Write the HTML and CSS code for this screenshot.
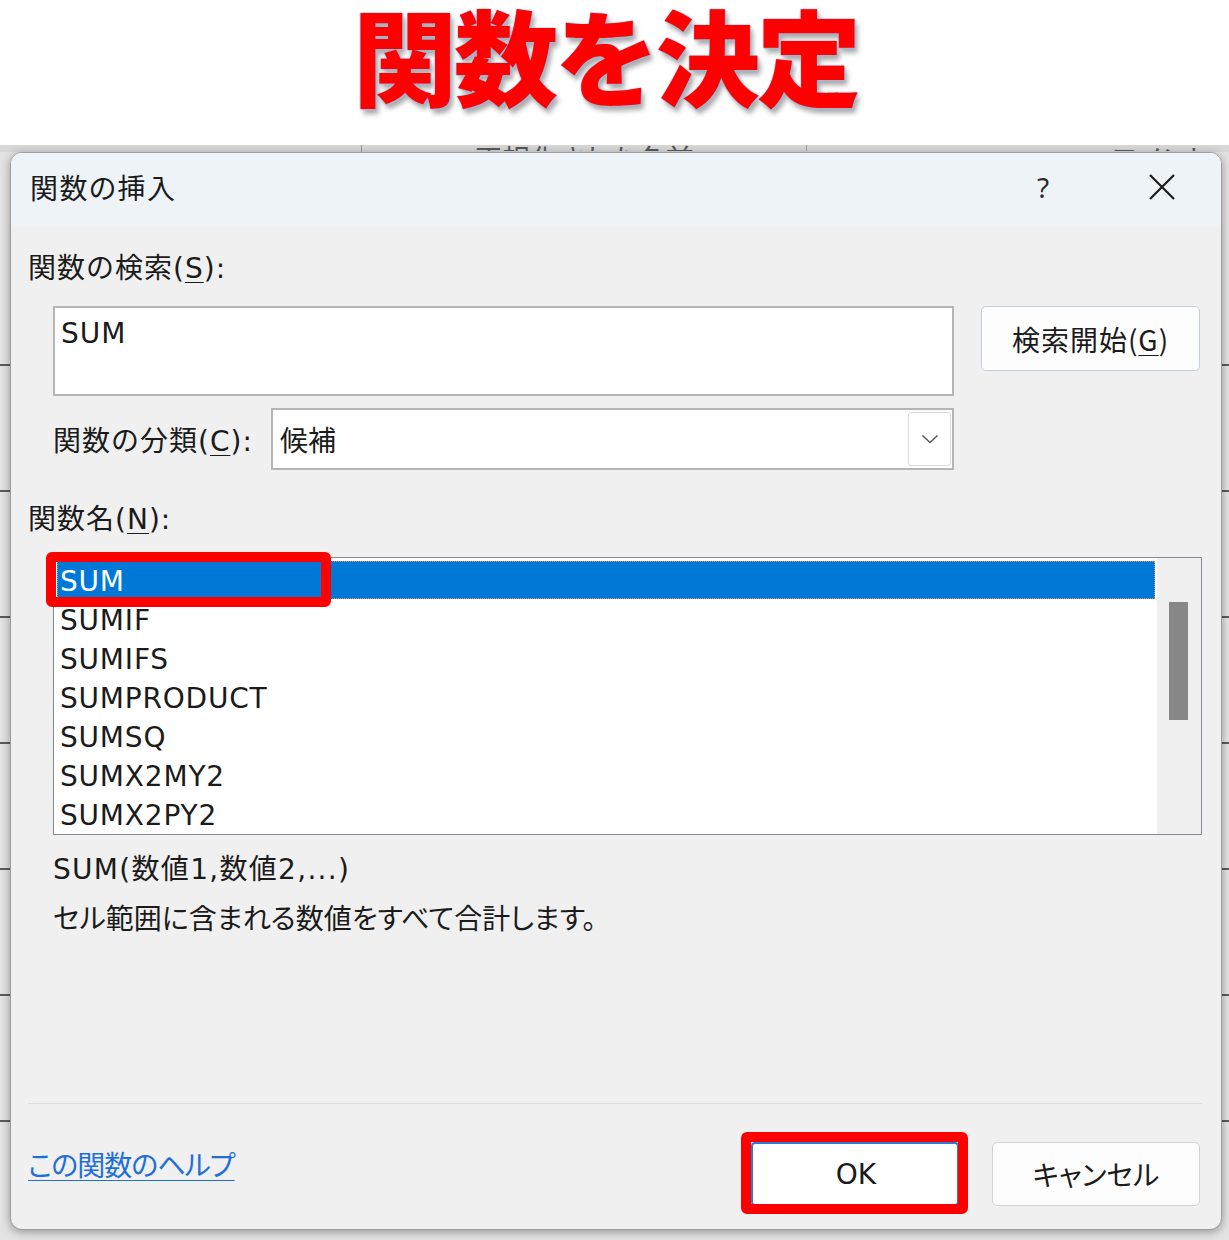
FILE: index.html
```html
<!DOCTYPE html>
<html lang="ja">
<head>
<meta charset="utf-8">
<title>関数の挿入</title>
<link rel="stylesheet" href="styles.css">
</head>
<body>
<header class="banner">
  <h1 class="headline">関数を決定</h1>
</header>
<main class="stage">
  <div class="sheet-head">
    <span class="sheet-col sheet-col-a"></span>
    <span class="sheet-col sheet-col-b">正規化された名前</span>
    <span class="sheet-col sheet-col-c">コメント</span>
  </div>
  <section class="dialog">
    <div class="titlebar">
      <span class="title">関数の挿入</span>
      <span class="help">?</span>
      <svg class="close" width="28" height="28" viewBox="0 0 28 28" aria-hidden="true">
        <path d="M2 2 L26 26 M26 2 L2 26" stroke="#1c1c1c" stroke-width="2.2" fill="none"/>
      </svg>
    </div>
    <div class="body">
      <div class="label">関数の検索(<u>S</u>):</div>
      <div class="search-row">
        <div class="textbox">SUM</div>
        <button class="btn btn-search">検索開始(<u>G</u>)</button>
      </div>
      <div class="cat-row">
        <span class="cat-label">関数の分類(<u>C</u>):</span>
        <div class="select">
          <span class="select-value">候補</span>
          <span class="drop">
            <svg width="18" height="10" viewBox="0 0 18 10" aria-hidden="true">
              <path d="M1.5 1.5 L9 8.5 L16.5 1.5" stroke="#5a5a5a" stroke-width="1.6" fill="none"/>
            </svg>
          </span>
        </div>
      </div>
      <div class="label label-n">関数名(<u>N</u>):</div>
      <div class="listbox">
        <ul class="items">
          <li class="item selected">SUM</li>
          <li class="item">SUMIF</li>
          <li class="item">SUMIFS</li>
          <li class="item">SUMPRODUCT</li>
          <li class="item">SUMSQ</li>
          <li class="item">SUMX2MY2</li>
          <li class="item">SUMX2PY2</li>
        </ul>
        <div class="scrollbar"><div class="thumb"></div></div>
        <span class="mark mark-sum"></span>
      </div>
      <p class="syntax">SUM(数値1,数値2,...)</p>
      <p class="desc">セル範囲に含まれる数値をすべて合計します。</p>
      <div class="footer">
        <a class="help-link" href="#">この関数のヘルプ</a>
        <div class="buttons">
          <div class="ok-wrap">
            <button class="btn btn-ok">OK</button>
            <span class="mark mark-ok"></span>
          </div>
          <button class="btn btn-cancel">キャンセル</button>
        </div>
      </div>
    </div>
  </section>
</main>
</body>
</html>
```

FILE: styles.css
```css
* {
  box-sizing: border-box;
}

html, body {
  margin: 0;
  padding: 0;
  background: #ffffff;
}

body {
  width: 1229px;
  height: 1240px;
  overflow: hidden;
  font-family: "Noto Sans CJK JP", "Noto Sans", sans-serif;
  color: #1b1b1b;
  font-feature-settings: "palt";
}

.banner {
  height: 145px;
  display: flex;
  justify-content: center;
  align-items: flex-start;
  background: #ffffff;
}

.headline {
  margin: 0;
  padding-right: 18px;
  font-family: "Noto Sans CJK JP", sans-serif;
  font-weight: 900;
  font-size: 104px;
  line-height: 108px;
  height: 120px;
  letter-spacing: -3px;
  color: #ff0000;
  font-feature-settings: normal;
  text-shadow:
    0 0 1px #8ea6cf,
    0 0 2px #9db3d8,
    1px 1px 2px #a9bddc,
    3px 5px 5px rgba(60, 60, 60, 0.45);
}

.stage {
  height: 1095px;
  background:
    repeating-linear-gradient(180deg, transparent 0 124px, #5b5b5b 124px 126px) 0 95px / 100% 100% no-repeat,
    #e3e3e3;
  display: flex;
  flex-direction: column;
}

.sheet-head {
  height: 7px;
  flex: none;
  display: flex;
  overflow: hidden;
  background: #d8d8d8;
  color: #555;
  font-size: 28px;
  line-height: 28px;
}

.sheet-col {
  border-right: 1px solid #9a9a9a;
  text-align: center;
  overflow: hidden;
}

.sheet-col-a { width: 362px; }
.sheet-col-b { width: 445px; }
.sheet-col-c { flex: 1; text-align: right; padding-right: 20px; border-right: none; }

.sheet-col-b, .sheet-col-c {
  position: relative;
  top: -1px;
}

.dialog {
  width: 1212px;
  height: 1078px;
  margin-left: 10px;
  background: #f0f0f0;
  border: 1px solid #9d9d9d;
  border-radius: 12px;
  box-shadow: 0 2px 10px rgba(0, 0, 0, 0.35);
  display: flex;
  flex-direction: column;
}

.titlebar {
  height: 73px;
  flex: none;
  display: flex;
  align-items: center;
  padding-left: 19px;
  padding-bottom: 5px;
  background: #eef3f8;
  border-radius: 11px 11px 0 0;
}

.title {
  font-size: 28px;
  letter-spacing: 1.5px;
  color: #1b1b1b;
  flex: 1;
}

.help {
  font-family: "Noto Sans", sans-serif;
  font-size: 28px;
  color: #2b2b2b;
  width: 20px;
  text-align: center;
  margin-right: 95px;
}

.close {
  margin-right: 45px;
}

.body {
  flex: 1;
  display: flex;
  flex-direction: column;
  padding: 0 19px 23px 17px;
  font-size: 28px;
}

.label, .cat-label, .btn-search {
  font-family: "DejaVu Sans", "Noto Sans CJK JP", sans-serif;
  font-size: 28px;
  letter-spacing: 1px;
  font-feature-settings: normal;
}

.label {
  line-height: 36px;
  margin-top: 25px;
}

.label u, .cat-label u, .btn u {
  text-decoration-thickness: 1px;
  text-underline-offset: 4px;
}

.search-row {
  display: flex;
  align-items: flex-start;
  margin-top: 19px;
  padding-left: 25px;
}

.textbox {
  width: 901px;
  height: 90px;
  background: #ffffff;
  border: 2px solid #b5b5b5;
  padding: 8px 6px;
  line-height: 36px;
  font-family: "DejaVu Sans", "Noto Sans CJK JP", sans-serif;
  letter-spacing: 1px;
}

.btn {
  font-family: "Noto Sans CJK JP", sans-serif;
  font-size: 28px;
  color: #1b1b1b;
  background: #fdfdfd;
  border: 1px solid #d0d4da;
  border-radius: 5px;
  padding: 0;
  font-feature-settings: "palt";
}

.btn-search {
  width: 219px;
  height: 65px;
  margin-left: 27px;
  border-color: #c5cfdc;
}

.cat-row {
  display: flex;
  align-items: center;
  margin-top: 12px;
  padding-left: 25px;
  height: 62px;
}

.cat-label {
  width: 218px;
  line-height: 36px;
  padding-top: 5px;
}

.select {
  width: 683px;
  height: 62px;
  background: #ffffff;
  border: 2px solid #b5b5b5;
  display: flex;
  align-items: center;
  padding: 2px 1px 2px 7px;
}

.select-value {
  flex: 1;
  line-height: 36px;
}

.drop {
  width: 43px;
  height: 54px;
  border: 1px solid #d9d9d9;
  border-radius: 3px;
  background: #ffffff;
  display: flex;
  align-items: center;
  justify-content: center;
}

.label-n {
  margin-top: 32px;
}

.listbox {
  position: relative;
  margin-top: 19px;
  margin-left: 25px;
  width: 1149px;
  height: 278px;
  border: 1px solid #838a94;
  background: #ffffff;
  display: flex;
}

.items {
  list-style: none;
  margin: 0;
  padding: 3px 2px 0 3px;
  flex: 1;
  font-family: "DejaVu Sans", "Noto Sans CJK JP", sans-serif;
}

.item {
  height: 39px;
  line-height: 37px;
  padding: 2px 0 0 3px;
  color: #1b1b1b;
  letter-spacing: 0.8px;
}

.item.selected {
  height: 38px;
  margin-bottom: 1px;
  background: #0078d7;
  color: #ffffff;
  outline: 1px dotted #d99a4e;
  outline-offset: -1px;
}

.scrollbar {
  width: 44px;
  background: #f0f0f0;
  padding-top: 44px;
  padding-left: 12px;
}

.thumb {
  width: 19px;
  height: 118px;
  background: #878787;
}

.mark {
  position: absolute;
  border: 10px solid #ff0000;
  border-radius: 6px;
  pointer-events: none;
}

.mark-sum {
  left: -8px;
  top: -6px;
  width: 285px;
  height: 55px;
}

.syntax, .desc {
  margin: 0;
  padding-left: 25px;
  line-height: 49px;
}

.syntax {
  margin-top: 10px;
  font-family: "DejaVu Sans", "Noto Sans CJK JP", sans-serif;
  letter-spacing: 1.3px;
}

.desc {
  margin-top: -1px;
}

.footer {
  margin-top: auto;
  border-top: 1px solid #dcdcdc;
  padding-top: 38px;
  display: flex;
  justify-content: space-between;
  align-items: flex-start;
}

.help-link {
  margin-top: 4px;
  line-height: 36px;
  color: #1f6fd6;
  letter-spacing: -1px;
  text-decoration: underline;
  text-decoration-thickness: 1px;
  text-underline-offset: 4px;
}

.buttons {
  display: flex;
  gap: 33px;
  margin-right: 2px;
}

.ok-wrap {
  position: relative;
}

.btn-ok {
  width: 208px;
  height: 64px;
  background: #ffffff;
  border: 2px solid #2b7bd6;
  border-radius: 4px;
  font-family: "DejaVu Sans", sans-serif;
  padding-left: 2px;
}

.mark-ok {
  left: -10px;
  top: -10px;
  width: 227px;
  height: 82px;
}

.btn-cancel {
  width: 208px;
  height: 64px;
}
```
